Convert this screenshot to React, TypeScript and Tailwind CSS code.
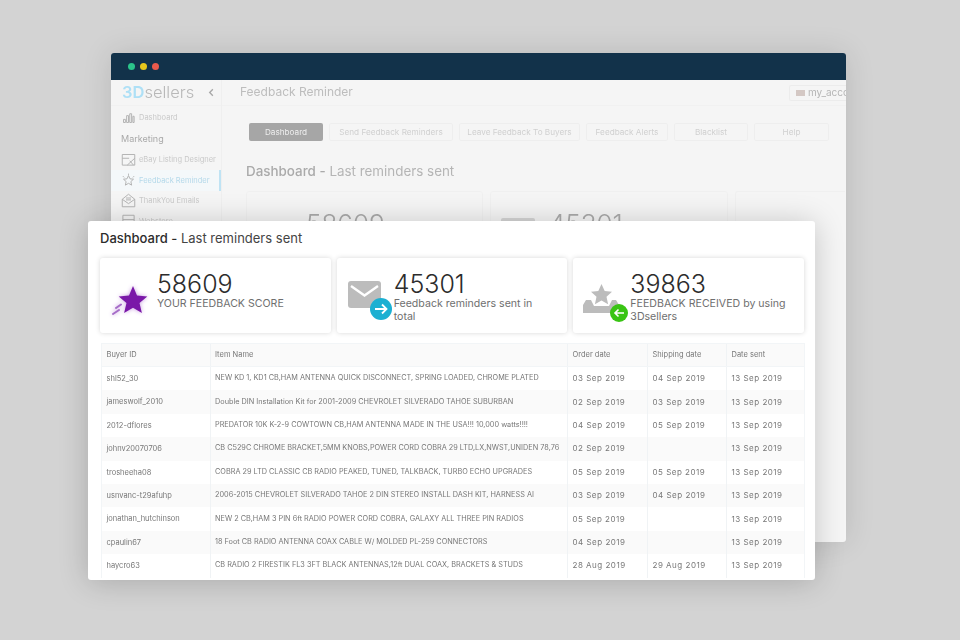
const font = { fontFamily: '"Inter", "Liberation Sans", sans-serif' };

const rows = [
  ["shl52_30", "NEW KD 1, KD1 CB,HAM ANTENNA QUICK DISCONNECT, SPRING LOADED, CHROME PLATED", "03 Sep 2019", "04 Sep 2019", "13 Sep 2019"],
  ["jameswolf_2010", "Double DIN Installation Kit for 2001-2009 CHEVROLET SILVERADO TAHOE SUBURBAN", "02 Sep 2019", "03 Sep 2019", "13 Sep 2019"],
  ["2012-dflores", "PREDATOR 10K K-2-9 COWTOWN CB,HAM ANTENNA MADE IN THE USA!!! 10,000 watts!!!!", "04 Sep 2019", "05 Sep 2019", "13 Sep 2019"],
  ["johnv20070706", "CB C529C CHROME BRACKET,5MM KNOBS,POWER CORD COBRA 29 LTD,LX,NWST,UNIDEN 78,76", "02 Sep 2019", "", "13 Sep 2019"],
  ["trosheeha08", "COBRA 29 LTD CLASSIC CB RADIO PEAKED, TUNED, TALKBACK, TURBO ECHO UPGRADES", "05 Sep 2019", "05 Sep 2019", "13 Sep 2019"],
  ["usnvanc-t29afuhp", "2006-2015 CHEVROLET SILVERADO TAHOE 2 DIN STEREO INSTALL DASH KIT, HARNESS AI", "03 Sep 2019", "04 Sep 2019", "13 Sep 2019"],
  ["jonathan_hutchinson", "NEW 2 CB,HAM 3 PIN 6ft RADIO POWER CORD COBRA, GALAXY ALL THREE PIN RADIOS", "05 Sep 2019", "", "13 Sep 2019"],
  ["cpaulin67", "18 Foot CB RADIO ANTENNA COAX CABLE W/ MOLDED PL-259 CONNECTORS", "04 Sep 2019", "", "13 Sep 2019"],
  ["haycro63", "CB RADIO 2 FIRESTIK FL3 3FT BLACK ANTENNAS,12ft DUAL COAX, BRACKETS & STUDS", "28 Aug 2019", "29 Aug 2019", "13 Sep 2019"],
];

const STAR = "M12 4l2.4 5.300 5.600.6-4.200 3.800 1.200 5.700L12 16.500l-5 2.900 1.200-5.700L4 9.900l5.600-.6z";

function StatCard({ icon, value, label }: { icon: React.ReactNode; value: string; label: React.ReactNode }) {
  return (
    <div className="flex h-[75px] flex-1 rounded-[3px] bg-white pl-[10px] shadow-[0_0_5px_rgba(0,0,0,0.16)]">
      <div className="relative h-full w-[47px] shrink-0">{icon}</div>
      <div className="pt-[12px]">
        <div className="text-[25px] font-light leading-[28px] text-[#2c2c2c]">{value}</div>
        <div className="w-[160px] text-[10.6px] leading-[12.5px] text-[#6f6f6f]">{label}</div>
      </div>
    </div>
  );
}

function SideItem({ icon, label, active }: { icon: React.ReactNode; label: string; active?: boolean }) {
  return (
    <div className={`flex h-[20.500px] items-center gap-[3px] pl-[10px] ${active ? "border-r-2 border-[#bfe3f4] bg-[#f4f8fa] text-[#b5d9ea]" : "text-[#c9c9c9]"}`}>
      <span className="flex w-[15px] justify-center text-[#b0b0b0]">{icon}</span>
      <span className="text-[7.500px]">{label}</span>
    </div>
  );
}

const outline = (d: string) => (
  <svg viewBox="0 0 24 24" className="h-[15px] w-[15px]" fill="none" stroke="currentColor" strokeWidth="1.500">
    <path d={d} />
  </svg>
);

const cols = "grid-cols-[107.500px_357.500px_80px_79px_1fr]";
const cellPad = "flex items-center overflow-hidden whitespace-nowrap pl-[4.500px]";

export default function App() {
  return (
    <div className="relative h-[640px] w-[960px] overflow-hidden bg-[#d3d3d3]" style={font}>
      {/* back window */}
      <div className="absolute left-[111px] top-[53px] flex h-[489px] w-[735px] flex-col overflow-hidden rounded-[3px] bg-[#f5f5f5] shadow-[0_0_30px_rgba(0,0,0,0.12)]">
        <div className="flex h-[27px] shrink-0 items-center gap-[5px] bg-[#12324a] pl-[17px]">
          <span className="h-[7px] w-[7px] rounded-full bg-[#2bc48a]" />
          <span className="h-[7px] w-[7px] rounded-full bg-[#e6c61c]" />
          <span className="h-[7px] w-[7px] rounded-full bg-[#ea5a4c]" />
        </div>
        <div className="flex flex-1 blur-[0.5px]">
          <div className="w-[111px] shrink-0 border-r border-[#efefef]">
            <div className="flex h-[26px] items-center justify-between border-b border-[#f1f1f1] pl-[11px] pr-[5px]">
              <div className="text-[16.500px] font-light text-[#b8b8b8]"><span className="font-semibold text-[#aee0f6]">3D</span>sellers</div>
              <svg viewBox="0 0 10 10" className="h-[9px] w-[9px]" fill="none" stroke="#a8a8a8" strokeWidth="1.500"><path d="M6.500 1.500L3 5l3.500 3.500" /></svg>
            </div>
            <div className="mt-[1px]">
              <SideItem label="Dashboard" icon={outline("M4 20v-5h3v5zM9 20V9h3v11zM14 20V6h3v14zM19 20V10h2v10z")} />
              <div className="flex h-[22px] items-center pl-[10px] text-[9px] text-[#a9a9a9]">Marketing</div>
              <SideItem label="eBay Listing Designer" icon={outline("M2 4h20v17H2zM2 10h11M10 21l12-11M14 14l6 7")} />
              <SideItem active label="Feedback Reminder" icon={outline(STAR + "M12 1v2M3 5l2 2M21 5l-2 2")} />
              <SideItem label="ThankYou Emails" icon={outline("M2 10l10-8 10 8v12H2zM2 10l10 7 10-7M8 8h8M8 11h8")} />
              <SideItem label="Webstore" icon={outline("M3 2h18v20H3zM3 9h18")} />
            </div>
          </div>
          <div className="min-w-0 flex-1">
            <div className="flex h-[26px] items-center justify-between border-b border-[#f1f1f1] pl-[18px]">
              <span className="pb-[2px] text-[12px] text-[#bdbdbd]">Feedback Reminder</span>
              <div className="flex h-[16px] w-[57px] items-center gap-[3px] overflow-hidden rounded-l-[2px] border border-r-0 border-[#ececec] pl-[6px] text-[10px] text-[#b5b5b5]">
                <span className="h-[6px] w-[9px] shrink-0 bg-[#d4c8c4]" />
                <span className="whitespace-nowrap">my_acco</span>
              </div>
            </div>
            <div className="flex gap-[6px] pl-[27px] pt-[17px]">
              <div className="flex h-[18px] w-[74px] items-center justify-center rounded-[2px] bg-[#a6a6a6] text-[8.200px] text-[#eeeeee]">Dashboard</div>
              {[["Send Feedback Reminders", "w-[124px]"], ["Leave Feedback To Buyers", "w-[121px]"], ["Feedback Alerts", "w-[82px]"], ["Blacklist", "w-[74px]"], ["Help", "w-[75px]"]].map(([t, w]) => (
                <div key={t} className={`flex h-[18px] items-center justify-center rounded-[2px] border border-[#eeeeee] text-[8.200px] text-[#d0d0d0] ${w}`}>{t}</div>
              ))}
            </div>
            <div className="pl-[24px] pt-[22px] text-[13.400px] leading-[16px] text-[#b5b5b5]"><span className="font-medium text-[#aaaaaa]">Dashboard -</span> Last reminders sent</div>
            <div className="flex h-[400px] gap-[7px] pl-[24px] pt-[12px]">
              <div className="h-[400px] w-[237px] shrink-0 rounded-[3px] border border-[#f0f0f0] pl-[59px] pt-[12px] text-[26px] font-light text-[#aaaaaa]">58609</div>
              <div className="flex h-[400px] w-[238px] shrink-0 rounded-[3px] border border-[#f0f0f0] pl-[10px] pt-[12px] text-[26px] font-light text-[#aaaaaa]">
                <span className="mr-[14px] mt-[14px] h-[28px] w-[34px] rounded-[2px] bg-[#d5d5d5]" />45301
              </div>
              <div className="h-[400px] w-[110px] shrink-0 rounded-l-[3px] border border-r-0 border-[#f0f0f0]" />
            </div>
          </div>
        </div>
      </div>

      {/* front window */}
      <div className="absolute left-[88px] top-[221px] flex h-[359px] w-[727px] flex-col rounded-[3px] bg-white pl-[12px] pr-[11px] shadow-[0_2px_30px_rgba(0,0,0,0.2)]">
        <div className="pt-[10px] text-[13px] leading-[15px] text-[#444]"><span className="font-medium text-[#2c2c2c]">Dashboard -</span> Last reminders sent</div>
        <div className="mt-[12px] flex gap-[6px]">
          <StatCard
            value="58609"
            label="YOUR FEEDBACK SCORE"
            icon={
              <svg viewBox="0 0 44 40" className="absolute left-[2px] top-[25px] h-[40px] w-[44px] drop-shadow-[0_0_2px_#c79be0]">
                <path d="M21 3l4 9.500 10.300.9-7.800 6.700 2.400 10-8.900-5.300-8.900 5.300 2.400-10-7.800-6.700 10.300-.9z" fill="#7a18a8" />
                <path d="M4 25l5-3.500M1 31l6-4" stroke="#a66cc8" strokeWidth="2" strokeLinecap="round" />
              </svg>
            }
          />
          <StatCard
            value="45301"
            label="Feedback reminders sent in total"
            icon={
              <div className="absolute left-[1px] top-[23px] h-[44px] w-[46px]">
                <svg viewBox="0 0 33 27" className="h-[27px] w-[33px]">
                  <rect width="33" height="27" rx="3" fill="#bcbcbc" />
                  <path d="M3 5l13.500 9.500L30 5" fill="none" stroke="#fff" strokeWidth="2.400" />
                </svg>
                <svg viewBox="0 0 22 22" className="absolute left-[22px] top-[17px] h-[22px] w-[22px]">
                  <circle cx="11" cy="11" r="11" fill="#1cb0d2" />
                  <path d="M5 11h11M12 6.500l4.500 4.500-4.500 4.500" fill="none" stroke="#fff" strokeWidth="1.800" />
                </svg>
              </div>
            }
          />
          <StatCard
            value="39863"
            label="FEEDBACK RECEIVED by using 3Dsellers"
            icon={
              <div className="absolute left-0 top-[26px] h-[40px] w-[46px]">
                <svg viewBox="0 0 36 30" className="h-[30px] w-[36px]">
                  <path d="M18.500 0l3.200 7 7.300.8-5.500 5 1.600 7.400-6.600-3.800-6.600 3.800 1.600-7.400-5.500-5 7.300-.8z" fill="#bcbcbc" />
                  <path d="M0 29v-8l3-5h5l3 6h15l3-6h4l3 5v8z" fill="#bcbcbc" />
                </svg>
                <svg viewBox="0 0 18 18" className="absolute left-[27px] top-[20px] h-[18px] w-[18px]">
                  <circle cx="9" cy="9" r="9" fill="#39c414" />
                  <path d="M14 9H5M8.500 5.500L5 9l3.500 3.500" fill="none" stroke="#fff" strokeWidth="1.600" />
                </svg>
              </div>
            }
          />
        </div>
        <div className="ml-[1px] mt-[10px] w-[703.500px] text-[7.500px] text-[#777] blur-[0.3px]">
          <div className={`grid h-[24px] ${cols} items-stretch border border-[#f2f5f7] bg-[#fafafa]`}>
            {["Buyer ID", "Item Name", "Order date", "Shipping date", "Date sent"].map((h, i) => (
              <div key={h} className={`${cellPad} ${i ? "border-l border-[#f0f3f5]" : ""}`}>{h}</div>
            ))}
          </div>
          {rows.map((r, i) => (
            <div key={r[0]} className={`grid h-[23.400px] ${cols} items-stretch border-x border-[#f2f5f7] ${i % 2 ? "bg-[#fafafa]" : "bg-white"}`}>
              {r.map((c, j) => (
                <div key={j} className={`${cellPad} ${j ? "border-l border-[#f0f3f5]" : ""} ${j === 1 ? "text-[7.300px]" : ""} ${j > 1 ? "pb-[1px] text-[8px] tracking-[0.5px]" : ""}`}>{c}</div>
              ))}
            </div>
          ))}
        </div>
      </div>
    </div>
  );
}
